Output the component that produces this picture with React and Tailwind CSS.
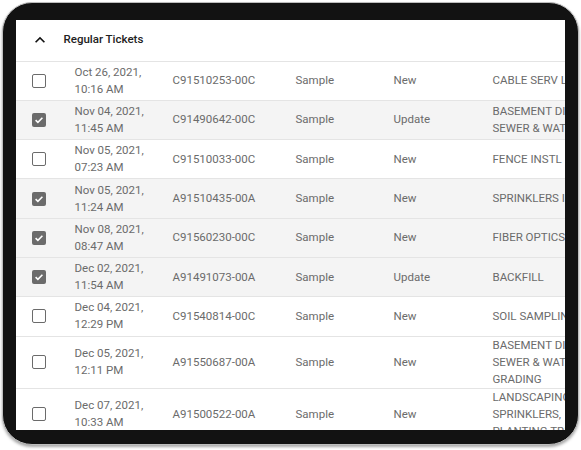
import React from 'react';

const rows = [
  { checked: false, date: 'Oct 26, 2021,', time: '10:16 AM', ticket: 'C91510253-00C', type: 'Sample', status: 'New', desc: ['CABLE SERV LINE'] },
  { checked: true, date: 'Nov 04, 2021,', time: '11:45 AM', ticket: 'C91490642-00C', type: 'Sample', status: 'Update', desc: ['BASEMENT DIG,', 'SEWER & WATER'] },
  { checked: false, date: 'Nov 05, 2021,', time: '07:23 AM', ticket: 'C91510033-00C', type: 'Sample', status: 'New', desc: ['FENCE INSTL'] },
  { checked: true, date: 'Nov 05, 2021,', time: '11:24 AM', ticket: 'A91510435-00A', type: 'Sample', status: 'New', desc: ['SPRINKLERS INSTL'] },
  { checked: true, date: 'Nov 08, 2021,', time: '08:47 AM', ticket: 'C91560230-00C', type: 'Sample', status: 'New', desc: ['FIBER OPTICS'] },
  { checked: true, date: 'Dec 02, 2021,', time: '11:54 AM', ticket: 'A91491073-00A', type: 'Sample', status: 'Update', desc: ['BACKFILL'] },
  { checked: false, date: 'Dec 04, 2021,', time: '12:29 PM', ticket: 'C91540814-00C', type: 'Sample', status: 'New', desc: ['SOIL SAMPLING'] },
  { checked: false, date: 'Dec 05, 2021,', time: '12:11 PM', ticket: 'A91550687-00A', type: 'Sample', status: 'New', desc: ['BASEMENT DIG,', 'SEWER & WATER,', 'GRADING'] },
  { checked: false, date: 'Dec 07, 2021,', time: '10:33 AM', ticket: 'A91500522-00A', type: 'Sample', status: 'New', desc: ['LANDSCAPING,', 'SPRINKLERS,', 'PLANTING TREES'] },
];

function Checkbox({ checked }) {
  if (checked) {
    return (
      <span className="flex h-[14px] w-[14px] items-center justify-center rounded-[2px] bg-[#6b6b6b]">
        <svg width="10" height="10" viewBox="0 0 10 10" fill="none">
          <path d="M1.6 5.2l2.3 2.2 4.5-4.6" stroke="#fff" strokeWidth="1.6" />
        </svg>
      </span>
    );
  }
  return <span className="block h-[14px] w-[14px] rounded-[2px] border-[1.5px] border-[#6b6b6b] bg-white" />;
}

export default function App() {
  return (
    <div className="h-[450px] w-[581px] bg-white pl-[2px] pt-[2px]" style={{ fontFamily: 'Roboto, "Liberation Sans", sans-serif' }}>
      {/* device frame */}
      <div className="h-[443px] w-[577px] rounded-[30px] border-[1.5px] border-[#bdbdbd] bg-[#121212] pb-[12px] pl-[12.5px] pr-[11.5px] pt-[16.5px] shadow-[0_2px_3px_rgba(0,0,0,0.35)]">
        <div className="h-[410px] w-[549px] overflow-hidden bg-white">
          {/* group header */}
          <div className="flex h-[42px] items-center border-b border-[#e4e4e4]">
            <div className="flex w-[48px] justify-center">
              <svg width="20" height="20" viewBox="0 0 24 24">
                <path d="M12 8l-6 6 1.41 1.41L12 10.83l4.59 4.58L18 14z" fill="#111" />
              </svg>
            </div>
            <span className="text-[11.5px] font-medium text-[#222]">Regular Tickets</span>
          </div>

          {rows.map((r, i) => (
            <div
              key={i}
              className={`grid min-h-[39.3px] grid-cols-[59px_98px_123px_98px_99px_120px] items-center border-b border-[#e4e4e4] text-[11.5px] leading-[17px] text-[#6b6b6b] ${r.checked ? 'bg-[#f4f4f4]' : 'bg-white'}`}
            >
              <div className="pl-[16px]">
                <Checkbox checked={r.checked} />
              </div>
              <div>
                <div>{r.date}</div>
                <div>{r.time}</div>
              </div>
              <div>{r.ticket}</div>
              <div>{r.type}</div>
              <div>{r.status}</div>
              <div className="whitespace-nowrap">
                {r.desc.map((d, j) => (
                  <div key={j}>{d}</div>
                ))}
              </div>
            </div>
          ))}
        </div>
      </div>
    </div>
  );
}
